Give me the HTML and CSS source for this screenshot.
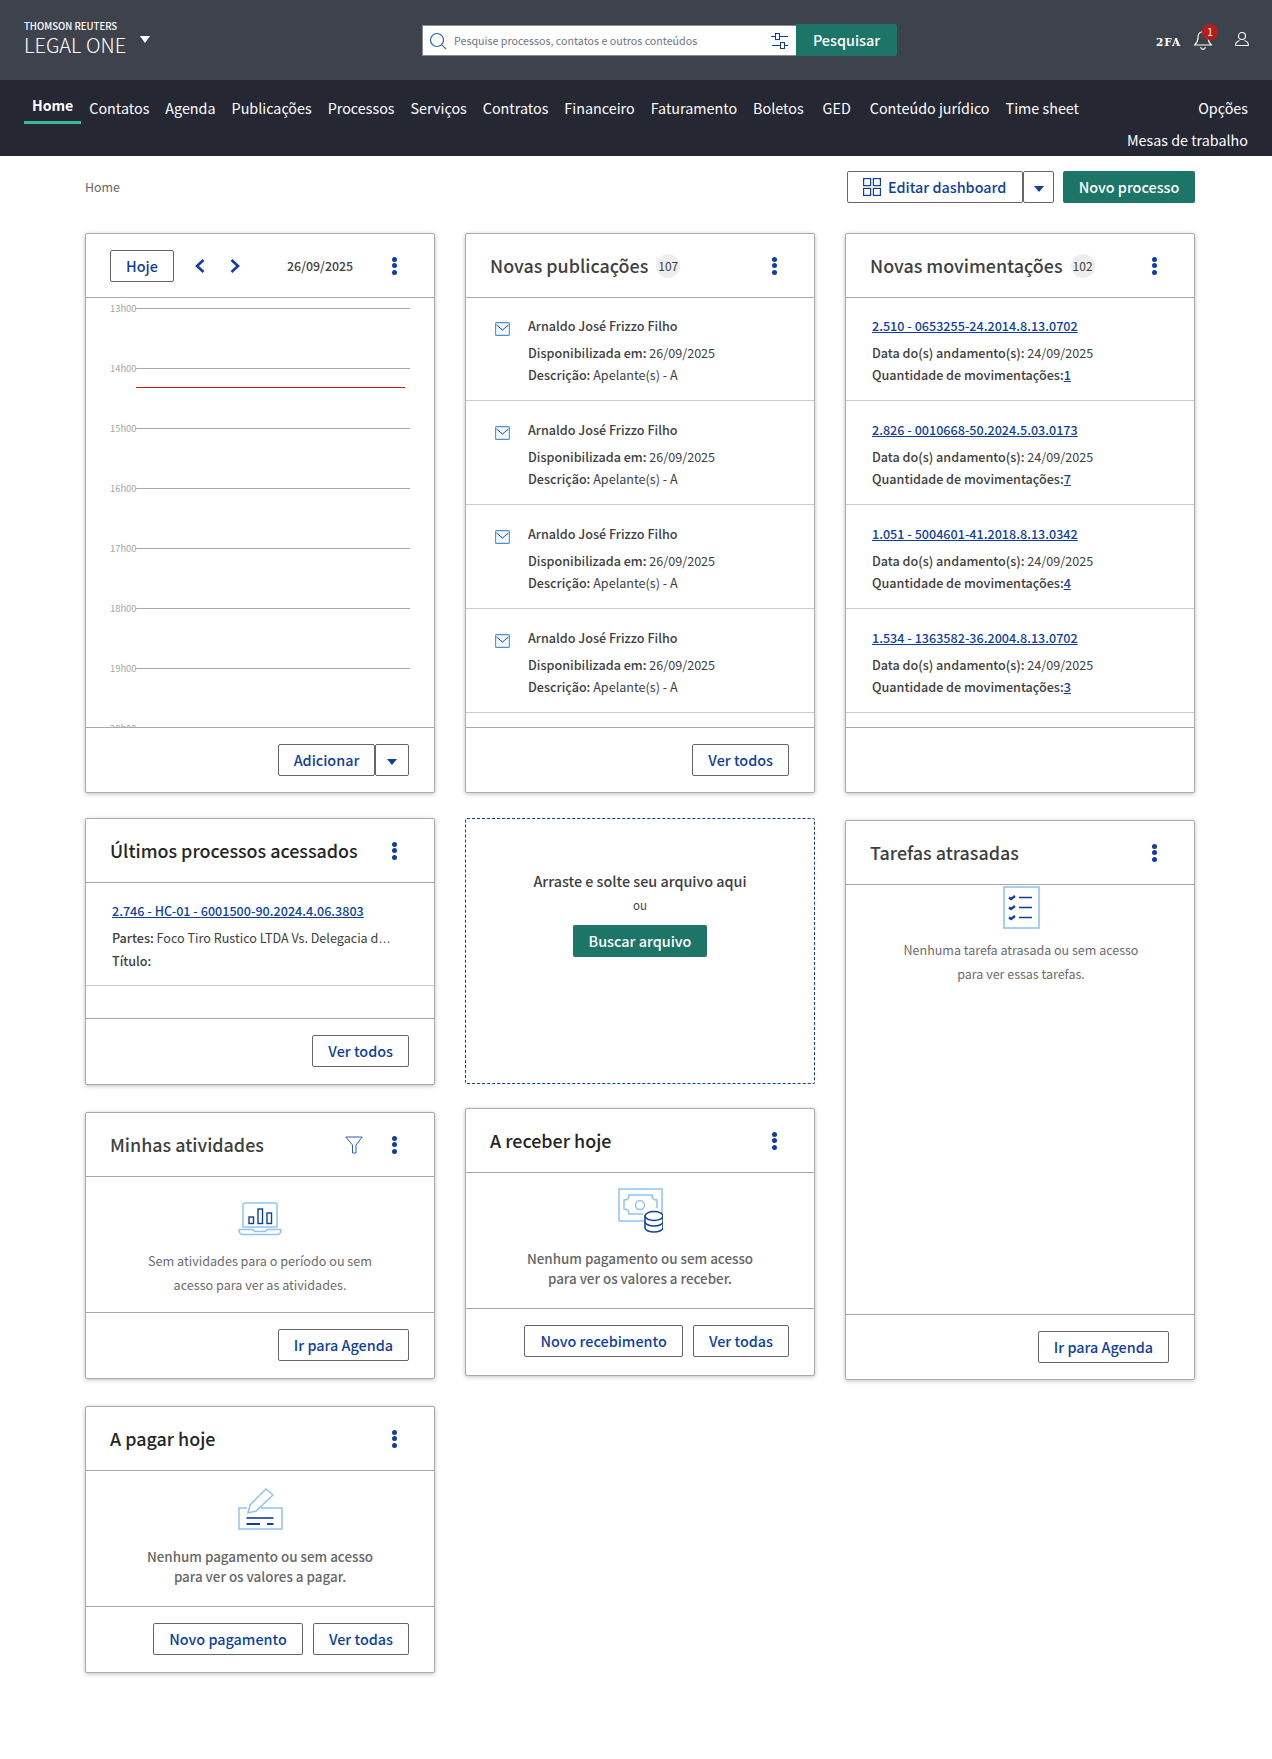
FILE: index.html
```html
<!DOCTYPE html>
<html lang="pt-BR">
<head>
<meta charset="utf-8">
<title>Legal One</title>
<link rel="stylesheet" href="styles.css">
</head>
<body>
<header class="topbar">
  <div class="brand">
    <div class="brand-small">THOMSON REUTERS</div>
    <div class="brand-big">LEGAL ONE</div>
  </div>
  <span class="brand-caret"></span>
  <div class="search">
    <div class="search-box">
      <svg class="ic-search" viewBox="0 0 18 18"><circle cx="8" cy="8" r="6.5" fill="none" stroke="#2f5fb5" stroke-width="1.2"/><path d="M12.8 12.8L17 17" stroke="#5a6a88" stroke-width="1.2"/></svg>
      <span class="search-text">Pesquise processos, contatos e outros conteúdos</span>
      <svg class="ic-sliders" viewBox="0 0 18 18"><path d="M0 4.5h4M9 4.5h8M1 13.5h8M14 13.5h3" stroke="#0f3f9d" fill="none"/><rect x="4.5" y="1.5" width="4" height="6" fill="none" stroke="#0f3f9d"/><rect x="9.5" y="10.500" width="4" height="6" fill="none" stroke="#0f3f9d"/></svg>
    </div>
    <button class="btn-green btn-search">Pesquisar</button>
  </div>
  <div class="top-icons">
    <span class="twofa">2FA</span>
    <span class="bell">
      <svg viewBox="0 0 18 20"><path d="M9 2.500c-3 0-4.500 2.300-4.500 5 0 4-1.500 5.500-3 7h15c-1.500-1.500-3-3-3-7 0-2.700-1.500-5-4.500-5zM6.800 16.500c.3 1.300 1.100 2 2.200 2s1.900-.7 2.200-2" fill="none" stroke="#fff" stroke-width="1"/></svg>
      <span class="bell-badge">1</span>
    </span>
    <svg class="ic-user" viewBox="0 0 16 16"><circle cx="8" cy="5" r="3.500" fill="none" stroke="#fff" stroke-width="1.100"/><path d="M1.500 14.500c0-3 2.500-4.500 4-5M14.500 14.500c0-3-2.500-4.500-4-5M1.500 14.500h13" fill="none" stroke="#fff" stroke-width="1.100"/></svg>
  </div>
</header>

<nav class="mainnav">
  <div class="nav-left">
    <a class="nav-link nav-active">Home</a>
    <a class="nav-link">Contatos</a>
    <a class="nav-link">Agenda</a>
    <a class="nav-link">Publicações</a>
    <a class="nav-link">Processos</a>
    <a class="nav-link">Serviços</a>
    <a class="nav-link">Contratos</a>
    <a class="nav-link">Financeiro</a>
    <a class="nav-link">Faturamento</a>
    <a class="nav-link">Boletos</a>
    <a class="nav-link nav-ged">GED</a>
    <a class="nav-link">Conteúdo jurídico</a>
    <a class="nav-link">Time sheet</a>
  </div>
  <div class="nav-right">
    <a class="nav-link">Opções</a>
    <a class="nav-link">Mesas de trabalho</a>
  </div>
</nav>

<main class="page">
  <div class="toolbar">
    <span class="crumb">Home</span>
    <div class="toolbar-actions">
      <button class="btn btn-edit">
        <svg class="ic-grid" viewBox="0 0 18 18"><g fill="none" stroke="#0f3f9d" stroke-width="1.200"><rect x=".6" y=".6" width="7" height="7"/><rect x="10.400" y=".6" width="7" height="7"/><rect x=".6" y="10.400" width="7" height="7"/><rect x="10.400" y="10.400" width="7" height="7"/></g></svg>
        Editar dashboard
      </button>
      <button class="btn btn-split"><span class="caret-blue"></span></button>
      <button class="btn-green btn-novo">Novo processo</button>
    </div>
  </div>

  <div class="columns">
    <div class="col">
      <section class="card card-tall">
        <div class="card-head head-agenda">
          <button class="btn btn-hoje">Hoje</button>
          <svg class="ic-chev chev-first" viewBox="0 0 12 16"><path d="M9.500 2L3 8l6.500 6" fill="none" stroke="#0f3f9d" stroke-width="2.600"/></svg>
          <svg class="ic-chev chev-second" viewBox="0 0 12 16"><path d="M2.500 2L9 8l-6.500 6" fill="none" stroke="#0f3f9d" stroke-width="2.600"/></svg>
          <span class="agenda-date">26/09/2025</span>
          <span class="kebab"><i></i><i></i><i></i></span>
        </div>
        <div class="card-body agenda">
          <div class="now-line"></div>
          <div class="hour"><span>13h00</span></div>
          <div class="hour"><span>14h00</span></div>
          <div class="hour"><span>15h00</span></div>
          <div class="hour"><span>16h00</span></div>
          <div class="hour"><span>17h00</span></div>
          <div class="hour"><span>18h00</span></div>
          <div class="hour"><span>19h00</span></div>
          <div class="hour"><span>20h00</span></div>
        </div>
        <div class="card-foot">
          <button class="btn btn-add">Adicionar</button>
          <button class="btn btn-split-add"><span class="caret-blue"></span></button>
        </div>
      </section>

      <section class="card card-ultimos">
        <div class="card-head"><h2 class="title title-dark">Últimos processos acessados</h2><span class="kebab"><i></i><i></i><i></i></span></div>
        <div class="card-body">
          <div class="item item-proc">
            <a class="link">2.746 - HC-01 - 6001500-90.2024.4.06.3803</a>
            <p class="line line-first nowrap"><b>Partes:</b> Foco Tiro Rustico LTDA Vs. Delegacia d<span class="dots">…</span></p>
            <p class="line"><b>Título:</b></p>
          </div>
        </div>
        <div class="card-foot foot-tall"><button class="btn">Ver todos</button></div>
      </section>

      <section class="card card-ativ">
        <div class="card-head">
          <h2 class="title">Minhas atividades</h2>
          <svg class="ic-filter" viewBox="0 0 18 18"><path d="M.7 1h16.600l-6.300 8v8H7.500V9z" fill="none" stroke="#2f5fb5" stroke-width="1"/></svg>
          <span class="kebab kebab-tight"><i></i><i></i><i></i></span>
        </div>
        <div class="card-body empty empty-ativ">
          <svg class="ill ill-laptop" viewBox="0 0 44 34"><path d="M5 25V3a2 2 0 0 1 2-2h30a2 2 0 0 1 2 2v22z" fill="none" stroke="#8fc3f2" stroke-width="1.500"/><path d="M1 27.500h14l1.500 2h11l1.500-2h14c0 3-1.500 5-4 5H5c-2.500 0-4-2-4-5z" fill="none" stroke="#8fc3f2" stroke-width="1.500"/><g fill="none" stroke="#0f3f9d" stroke-width="1.400"><rect x="11" y="15" width="4.500" height="6.500"/><rect x="20" y="7" width="4.500" height="14.500"/><rect x="29" y="11" width="4.500" height="10.500"/></g></svg>
          <p class="empty-text">Sem atividades para o período ou sem<br>acesso para ver as atividades.</p>
        </div>
        <div class="card-foot foot-tall"><button class="btn">Ir para Agenda</button></div>
      </section>

      <section class="card card-pagar">
        <div class="card-head"><h2 class="title title-dark">A pagar hoje</h2><span class="kebab"><i></i><i></i><i></i></span></div>
        <div class="card-body empty empty-pagar">
          <svg class="ill ill-pen" viewBox="0 0 45 44"><path d="M9 21H1v21h43V21H23" fill="none" stroke="#8fc3f2" stroke-width="1.500"/><path d="M10 26l2-8L28 2l7 6L18 24z" fill="#fff" stroke="#8fc3f2" stroke-width="1.500"/><path d="M8.500 31h27" stroke="#0f3f9d" stroke-width="1.600"/><path d="M8.500 37h13.500M29 37h6.500" stroke="#0f3f9d" stroke-width="2"/></svg>
          <p class="empty-text empty-strong">Nenhum pagamento ou sem acesso<br>para ver os valores a pagar.</p>
        </div>
        <div class="card-foot foot-tall foot-gap">
          <button class="btn">Novo pagamento</button>
          <button class="btn">Ver todas</button>
        </div>
      </section>
    </div>

    <div class="col">
      <section class="card card-tall">
        <div class="card-head">
          <h2 class="title">Novas publicações</h2><span class="count">107</span>
          <span class="kebab"><i></i><i></i><i></i></span>
        </div>
        <div class="card-body list">
          <div class="item item-pub">
            <svg class="ic-mail" viewBox="0 0 15 14"><rect x=".6" y=".6" width="13.800" height="12.800" rx="1" fill="#f3f8fe" stroke="#4f8fd8" stroke-width="1.100"/><path d="M1.500 3l6 5 6-5" fill="none" stroke="#0f3f9d" stroke-width=".9"/></svg>
            <div><p class="pub-name">Arnaldo José Frizzo Filho</p><p class="line line-first"><b>Disponibilizada em:</b> 26/09/2025</p><p class="line"><b>Descrição:</b> Apelante(s) - A</p></div>
          </div>
          <div class="item item-pub">
            <svg class="ic-mail" viewBox="0 0 15 14"><rect x=".6" y=".6" width="13.800" height="12.800" rx="1" fill="#f3f8fe" stroke="#4f8fd8" stroke-width="1.100"/><path d="M1.500 3l6 5 6-5" fill="none" stroke="#0f3f9d" stroke-width=".9"/></svg>
            <div><p class="pub-name">Arnaldo José Frizzo Filho</p><p class="line line-first"><b>Disponibilizada em:</b> 26/09/2025</p><p class="line"><b>Descrição:</b> Apelante(s) - A</p></div>
          </div>
          <div class="item item-pub">
            <svg class="ic-mail" viewBox="0 0 15 14"><rect x=".6" y=".6" width="13.800" height="12.800" rx="1" fill="#f3f8fe" stroke="#4f8fd8" stroke-width="1.100"/><path d="M1.500 3l6 5 6-5" fill="none" stroke="#0f3f9d" stroke-width=".9"/></svg>
            <div><p class="pub-name">Arnaldo José Frizzo Filho</p><p class="line line-first"><b>Disponibilizada em:</b> 26/09/2025</p><p class="line"><b>Descrição:</b> Apelante(s) - A</p></div>
          </div>
          <div class="item item-pub">
            <svg class="ic-mail" viewBox="0 0 15 14"><rect x=".6" y=".6" width="13.800" height="12.800" rx="1" fill="#f3f8fe" stroke="#4f8fd8" stroke-width="1.100"/><path d="M1.500 3l6 5 6-5" fill="none" stroke="#0f3f9d" stroke-width=".9"/></svg>
            <div><p class="pub-name">Arnaldo José Frizzo Filho</p><p class="line line-first"><b>Disponibilizada em:</b> 26/09/2025</p><p class="line"><b>Descrição:</b> Apelante(s) - A</p></div>
          </div>
        </div>
        <div class="card-foot"><button class="btn">Ver todos</button></div>
      </section>

      <section class="drop">
        <p class="drop-title">Arraste e solte seu arquivo aqui</p>
        <p class="drop-or">ou</p>
        <button class="btn-green btn-buscar">Buscar arquivo</button>
      </section>

      <section class="card card-receber">
        <div class="card-head"><h2 class="title title-dark">A receber hoje</h2><span class="kebab"><i></i><i></i><i></i></span></div>
        <div class="card-body empty empty-receber">
          <svg class="ill ill-money" viewBox="0 0 45 45"><path d="M26 33H1V1h43v24" fill="none" stroke="#8fc3f2" stroke-width="1.500"/><path d="M6 17v-5c3 0 5-2 5-5h23c0 3 2 5 5 5v8M6 17v4c3 0 5 2 5 5h14" fill="none" stroke="#8fc3f2" stroke-width="1.500"/><circle cx="22" cy="17" r="4.500" fill="none" stroke="#8fc3f2" stroke-width="1.500"/><g fill="#fff" stroke="#0f3f9d" stroke-width="1.500"><path d="M27 28v12c0 2 4 4 9 4s9-2 9-4V28z"/><ellipse cx="36" cy="28" rx="9" ry="4.500"/></g><path d="M27 34c0 2 4 4 9 4s9-2 9-4" fill="none" stroke="#0f3f9d" stroke-width="1.500"/></svg>
          <p class="empty-text empty-strong">Nenhum pagamento ou sem acesso<br>para ver os valores a receber.</p>
        </div>
        <div class="card-foot foot-tall foot-gap">
          <button class="btn">Novo recebimento</button>
          <button class="btn">Ver todas</button>
        </div>
      </section>
    </div>

    <div class="col">
      <section class="card card-tall">
        <div class="card-head">
          <h2 class="title">Novas movimentações</h2><span class="count">102</span>
          <span class="kebab"><i></i><i></i><i></i></span>
        </div>
        <div class="card-body list">
          <div class="item item-mov"><a class="link">2.510 - 0653255-24.2014.8.13.0702</a><p class="line line-first"><b>Data do(s) andamento(s):</b> 24/09/2025</p><p class="line"><b>Quantidade de movimentações:</b><a class="link">1</a></p></div>
          <div class="item item-mov"><a class="link">2.826 - 0010668-50.2024.5.03.0173</a><p class="line line-first"><b>Data do(s) andamento(s):</b> 24/09/2025</p><p class="line"><b>Quantidade de movimentações:</b><a class="link">7</a></p></div>
          <div class="item item-mov"><a class="link">1.051 - 5004601-41.2018.8.13.0342</a><p class="line line-first"><b>Data do(s) andamento(s):</b> 24/09/2025</p><p class="line"><b>Quantidade de movimentações:</b><a class="link">4</a></p></div>
          <div class="item item-mov"><a class="link">1.534 - 1363582-36.2004.8.13.0702</a><p class="line line-first"><b>Data do(s) andamento(s):</b> 24/09/2025</p><p class="line"><b>Quantidade de movimentações:</b><a class="link">3</a></p></div>
        </div>
        <div class="card-foot"></div>
      </section>

      <section class="card card-tarefas">
        <div class="card-head"><h2 class="title">Tarefas atrasadas</h2><span class="kebab"><i></i><i></i><i></i></span></div>
        <div class="card-body empty empty-tarefas">
          <svg class="ill ill-tasks" viewBox="0 0 37 43"><rect x="1" y="1" width="35" height="41" fill="none" stroke="#8fc3f2" stroke-width="1.600"/><g fill="none" stroke="#0f3f9d"><path d="M6 11.500l2 1.500 4-3M6 21.500l2 1.500 4-3M6 31.500l2 1.500 4-3" stroke-width="2.200"/><path d="M16 11.500h13M16 21.500h13M16 31.500h13" stroke-width="1.500"/></g></svg>
          <p class="empty-text">Nenhuma tarefa atrasada ou sem acesso<br>para ver essas tarefas.</p>
        </div>
        <div class="card-foot"><button class="btn">Ir para Agenda</button></div>
      </section>
    </div>
  </div>
</main>
</body>
</html>
```
FILE: styles.css
```css
* { box-sizing: border-box; }
html, body { margin: 0; padding: 0; }
body {
  font-family: "Noto Sans CJK KR", "Noto Sans CJK SC", "Noto Sans", sans-serif;
  font-size: 12.6px;
  line-height: 20px;
  color: #404040;
  background: #fff;
  height: 1759px;
  overflow: hidden;
}
p, h2 { margin: 0; font: inherit; }
button { font: inherit; cursor: pointer; }

.topbar {
  height: 80px;
  background: #3e424d;
  display: flex;
  align-items: flex-start;
  padding-left: 24px;
  position: relative;
}
.brand { color: #fff; padding-top: 20px; width: 116px; }
.brand-small { font-size: 9.6px; line-height: 13px; font-weight: 500; }
.brand-big { font-size: 20px; line-height: 24px; font-weight: 300; margin-top: 0; }
.brand-caret {
  margin-top: 36px;
  border-left: 5px solid transparent;
  border-right: 5px solid transparent;
  border-top: 7px solid #fff;
}
.search { display: flex; position: absolute; left: 422px; top: 24px; }
.search-box {
  width: 375px; background: #fff; border: 1px solid #8a8a8a;
  display: flex; align-items: center; padding: 0 6px;
  margin-top: 1px; height: 31px;
}
.ic-search { width: 18px; height: 18px; margin-right: 7px; flex: none; }
.search-text { font-size: 10.7px; color: #6f7480; flex: 1; }
.ic-sliders { width: 18px; height: 18px; flex: none; margin-right: 1px; }
.btn-green {
  background: #1d7567; color: #fff; border: 0; border-radius: 2px;
  font-weight: 500; font-size: 14.4px; line-height: 20px;
}
.btn-search { width: 101px; height: 32px; margin-left: -1px; border-radius: 0 2px 2px 0; }
.top-icons { position: absolute; right: 0; top: 0; height: 80px; }
.twofa {
  position: absolute; right: 91px; top: 32px;
  font-family: "DejaVu Serif", serif; font-weight: 700; font-size: 10.5px; letter-spacing: .9px; color: #fff;
}
.bell { position: absolute; right: 59px; top: 29px; width: 20px; height: 22px; }
.bell svg { width: 20px; height: 22px; display: block; }
.bell-badge {
  position: absolute; left: 9px; top: -5px; width: 16px; height: 16px; border-radius: 50%;
  background: #b71c1c; color: #fff; font-size: 10px; line-height: 16px; text-align: center;
}
.ic-user { position: absolute; right: 22px; top: 31px; width: 16px; height: 16px; }

.mainnav {
  height: 76px; background: #252733; display: flex; justify-content: space-between;
  padding: 0 16px 0 24px; color: #fff;
}
.nav-left { display: flex; align-items: flex-start; padding-top: 11px; }
.nav-right { display: flex; flex-direction: column; align-items: flex-end; padding-top: 11px; }
.nav-link { font-size: 14.33px; line-height: 26px; padding: 4px 8px; color: #fff; white-space: nowrap; }
.nav-ged { margin: 0 3px; }
.nav-right .nav-link + .nav-link { margin-top: -2px; }
.nav-active { font-size: 14.1px; font-weight: 700; border-bottom: 3px solid #3cb89f; padding: 2px 8px 0; line-height: 25px; height: 33px; }

.page { padding: 0 77px 0 85px; }
.toolbar { display: flex; justify-content: space-between; align-items: center; height: 32px; margin-top: 15px; }
.crumb { font-size: 12.4px; color: #666; }
.toolbar-actions { display: flex; height: 32px; }
.btn {
  height: 32px; padding: 0 15px; background: #fff; color: #0f3f9d;
  border: 1px solid #666; border-radius: 2px;
  font-weight: 500; font-size: 14.4px; line-height: 20px; white-space: nowrap;
}
.btn-edit { display: flex; align-items: center; width: 176px; padding: 0 0 0 15px; }
.ic-grid { width: 18px; height: 18px; margin-right: 7px; }
.btn-split { width: 31px; padding: 0; }
.caret-blue {
  display: inline-block; vertical-align: middle;
  border-left: 5px solid transparent; border-right: 5px solid transparent; border-top: 6px solid #0f3f9d;
}
.btn-novo { width: 132px; margin-left: 9px; }

.columns { display: flex; gap: 30px; margin-top: 30px; align-items: flex-start; }
.col { width: 350px; display: flex; flex-direction: column; gap: 27px; }

.card {
  background: #fff; border: 1px solid #aaa; border-radius: 2px;
  box-shadow: 0 1px 4px rgba(0,0,0,.25);
  display: flex; flex-direction: column;
}
.card-tall { height: 560px; }
.card-ultimos { height: 267px; margin-top: -2px; }
.card-ativ { height: 267px; }
.card-pagar { height: 267px; }
.card-receber { height: 268px; margin-top: -3px; }
.card-tarefas { height: 560px; }

.card-head {
  height: 64px; flex: none; border-bottom: 1px solid #aaa;
  display: flex; align-items: center; padding: 0 24px; position: relative;
}
.title { font-size: 17.9px; line-height: 28px; font-weight: 500; color: #404040; margin-top: -2px; }
.title-dark { color: #252525; }
.count {
  width: 24px; height: 24px; border-radius: 50%; background: #eee; margin-left: 8px;
  font-size: 12px; line-height: 24px; text-align: center; color: #404040;
}
.kebab {
  margin-left: auto; width: 6px; height: 18px; margin-right: 12px;
  display: flex; flex-direction: column; justify-content: space-between;
}
.kebab i { width: 5px; height: 5px; border-radius: 50%; background: #0f3f9d; display: block; }
.kebab-tight { margin-left: 29px; }
.ic-filter { width: 18px; height: 18px; margin-left: auto; }

.btn-hoje { width: 64px; padding: 0; }
.ic-chev { width: 12px; height: 16px; flex: none; }
.chev-first { margin-left: 20px; }
.chev-second { margin-left: 23px; }
.agenda-date { font-weight: 500; font-size: 12.4px; margin-left: 46px; }

.card-body { flex: 1; min-height: 0; overflow: hidden; }
.agenda { position: relative; padding: 0 24px; }
.hour { height: 60px; position: relative; }
.hour::after {
  content: ""; position: absolute; left: 25px; right: 0; top: 10px; border-top: 1px solid #aaa;
}
.hour span {
  position: absolute; left: 0; top: 3px; font-size: 9.4px; line-height: 14px; color: #a4a4a4;
}
.now-line {
  position: absolute; left: 50px; right: 29px; top: 89px; border-top: 1px solid #c4200f;
}

.card-foot {
  height: 64px; flex: none; border-top: 1px solid #aaa;
  display: flex; justify-content: flex-end; align-items: flex-start;
  padding: 16px 25px 0;
}
.foot-tall { height: 66px; }
.card-receber .card-foot { height: 67px; }
.card-tall .card-foot, .card-tarefas .card-foot { height: 65px; }
.foot-gap { gap: 10px; }
.btn-add { width: 97px; padding: 0; }
.btn-split-add { width: 34px; padding: 0; }

.list { margin-top: -1px; }
.item { border-bottom: 1px solid #ccc; height: 104px; }
.item-pub { display: flex; padding: 19px 0 0 29px; }
.ic-mail { width: 15px; height: 14px; margin: 6px 18px 0 0; flex: none; }
.item-mov { padding: 19px 24px 0 26px; }
.item-proc { height: 103px; padding: 18px 24px 0 26px; }
.pub-name { font-weight: 500; font-size: 12.6px; line-height: 20px; }
.line { font-size: 12.6px; line-height: 22px; color: #404040; }
.line-first { margin-top: 6px; }
.line b { font-weight: 500; }
.link { font-weight: 500; font-size: 12.6px; line-height: 20px; color: #0f3f9d; text-decoration: underline; }
.nowrap { white-space: nowrap; }
.dots { font-family: "Liberation Sans", sans-serif; }

.drop {
  height: 266px; border: 1px dashed #0f3f9d; border-radius: 2px; margin-top: -2px;
  display: flex; flex-direction: column; align-items: center; padding-top: 51px;
}
.drop-title { font-size: 14.35px; line-height: 22px; font-weight: 500; color: #404040; }
.drop-or { font-size: 11.5px; line-height: 18px; margin-top: 4px; }
.btn-buscar { width: 134px; height: 32px; margin-top: 11px; }

.empty { text-align: center; }
.ill { display: block; margin: 0 auto; }
.empty-text { font-size: 12.6px; line-height: 24px; color: #6b6b6b; }
.empty-strong { font-size: 13.4px; font-weight: 500; line-height: 20px; color: #666; }
.empty-ativ { padding-top: 25px; }
.ill-laptop { width: 44px; height: 34px; }
.empty-ativ .empty-text { margin-top: 13px; }
.empty-receber { padding-top: 15px; }
.ill-money { width: 45px; height: 45px; }
.empty-receber .empty-text { margin-top: 15px; }
.empty-pagar { padding-top: 16px; }
.ill-pen { width: 45px; height: 44px; }
.empty-pagar .empty-text { margin-top: 15px; }
.empty-tarefas { padding: 1px 0 0 2px; }
.ill-tasks { width: 37px; height: 43px; }
.empty-tarefas .empty-text { margin-top: 9px; font-size: 12.5px; }
```
